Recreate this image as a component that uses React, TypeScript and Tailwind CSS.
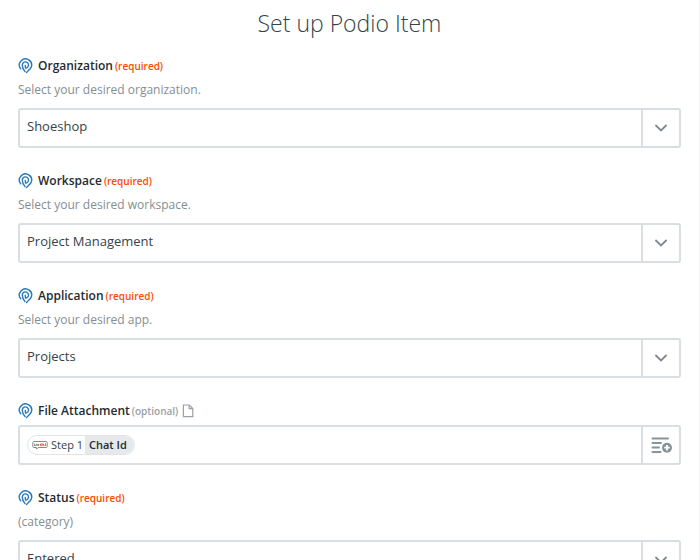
// App.tsx
import { useState } from "react";

type SelectFieldProps = {
    id: string;
    label: string;
    help: string;
    options: string[];
};

function PodioIcon() {
    return (
        <svg className="h-4 w-4 shrink-0" viewBox="0 0 16 16" fill="none" stroke="#2a7ab8" strokeWidth="1.4" strokeLinecap="round" strokeLinejoin="round">
            <path d="M2.7 10.8A6.1 6.1 0 1 1 13.1 9.4C12.2 11.2 10.2 12.6 8.6 14.5" />
            <path d="M7 13.6C5.4 11.6 4.3 9.6 4.3 7.2A3.1 3.1 0 1 1 7.5 10.1L7.3 7.4" />
        </svg>
    );
}

function ChevronIcon() {
    return (
        <svg className="h-3 w-4" viewBox="0 0 16 12" fill="none" stroke="#7d898e" strokeWidth="1.8">
            <path d="M2.4 3L8 8.4L13.6 3" />
        </svg>
    );
}

function FileIcon() {
    return (
        <svg className="h-3.5 w-3" viewBox="0 0 12 14" fill="none" stroke="#99a1a4" strokeWidth="1.2">
            <path d="M1.4 1H7.2L10.8 4.6V12.6H1.4Z" />
            <path d="M7.2 1V4.6H10.8" />
        </svg>
    );
}

function InsertFieldIcon() {
    return (
        <svg className="h-5 w-6" viewBox="0 0 24 20" fill="none">
            <path d="M3.5 3.5H19M3.5 8H12M3.5 12.5H10M3.5 17H11.5" stroke="#87959b" strokeWidth="2" strokeLinecap="round" />
            <circle cx="18" cy="12.7" r="5" fill="#87959b" />
            <path d="M18 10V15.4M15.3 12.7H20.7" stroke="#fff" strokeWidth="1.8" />
        </svg>
    );
}

function LiveChatIcon() {
    return (
        <svg className="h-4 w-4" viewBox="0 0 16 16" fill="none">
            <path d="M1.6 4.5H14.4Q15.2 4.5 15.2 5.5V9.6Q15.2 10.5 14.4 10.5H6.2L4.6 12.2V10.5H1.6Q.8 10.5 .8 9.6V5.5Q.8 4.5 1.6 4.5Z" stroke="#8a8a8a" strokeWidth="1" />
            <path d="M2.6 6.7V8.7H3.8M4.8 6.8V8.8M5.7 7L6.3 8.7L7 7" stroke="#555" strokeWidth=".8" />
            <path d="M9.8 6.9H8.6V8.7H9.8M10.8 6.4V8.8M10.8 7.7H12V8.8M13.5 6.5V8.8" stroke="#f4511e" strokeWidth="1" />
        </svg>
    );
}

function SelectField({ id, label, help, options }: SelectFieldProps) {
    const [value, setValue] = useState(options[0]);

    return (
        <div>
            <div className="flex h-[18px] items-center">
                <PodioIcon />
                <label htmlFor={id} className="ml-1 text-[12px] font-semibold text-[#1f2b30]">
                    {label}
                </label>
                <span className="ml-0.5 text-[10px] font-semibold text-[#ff4a00]">(required)</span>
            </div>
            <p className="mt-[5px] mb-2 text-[12px] leading-5 text-[#848e92]">{help}</p>
            <div className="grid h-10 grid-cols-[1fr_38px] rounded-[3px] border-2 border-[#d8dee1] bg-white">
                <select
                    id={id}
                    className="col-span-2 col-start-1 row-start-1 h-full w-full appearance-none bg-transparent pr-10 pb-0.5 pl-[7px] text-[13px] text-[#354349]"
                    value={value}
                    onChange={(e) => setValue(e.target.value)}
                >
                    {options.map((option) => (
                        <option key={option}>{option}</option>
                    ))}
                </select>
                <span className="pointer-events-none col-start-2 row-start-1 flex items-center justify-center border-l-2 border-[#d8dee1]">
                    <ChevronIcon />
                </span>
            </div>
        </div>
    );
}

export default function App() {
    const [attachment, setAttachment] = useState("");

    return (
        <div className="min-h-screen border-r border-[#f1f3f4] bg-white pr-[18px] pl-[18px] font-['Open_Sans','Noto_Sans',sans-serif]">
            <h1 className="pt-[7px] text-center text-[23px] leading-8 font-light text-[#354349]">Set up Podio Item</h1>
            <form className="mt-[18px] flex flex-col gap-6">
                <SelectField id="organization" label="Organization" help="Select your desired organization." options={["Shoeshop"]} />
                <SelectField id="workspace" label="Workspace" help="Select your desired workspace." options={["Project Management"]} />
                <SelectField id="application" label="Application" help="Select your desired app." options={["Projects"]} />
                <div>
                    <div className="flex h-[18px] items-center">
                        <PodioIcon />
                        <label htmlFor="attachment" className="ml-1 text-[12px] font-semibold text-[#1f2b30]">
                            File Attachment
                        </label>
                        <span className="mr-1 ml-0.5 text-[10px] font-semibold text-[#99a1a4]">(optional)</span>
                        <FileIcon />
                    </div>
                    <div className="mt-[5px] flex h-10 rounded-[3px] border-2 border-[#d8dee1] bg-white">
                        <div className="flex flex-1 items-center pl-[7px]">
                            <span className="flex h-5 shrink-0 items-center overflow-hidden rounded-full border border-[#e1e5e7] text-[11px] text-[#354349]">
                                <span className="flex items-center gap-[3px] pr-0.5 pl-1">
                                    <LiveChatIcon />
                                    Step 1
                                </span>
                                <span className="flex h-full items-center bg-[#e6e9eb] pr-[7px] pl-1 font-semibold text-[#1f2b30]">Chat Id</span>
                            </span>
                            <input
                                id="attachment"
                                type="text"
                                className="ml-2 min-w-0 flex-1 text-[13px] text-[#354349] outline-none"
                                value={attachment}
                                onChange={(e) => setAttachment(e.target.value)}
                            />
                        </div>
                        <button type="button" aria-label="Insert a field" className="flex w-[38px] items-center justify-center border-l-2 border-[#d8dee1]">
                            <InsertFieldIcon />
                        </button>
                    </div>
                </div>
                <SelectField id="status" label="Status" help="(category)" options={["Entered"]} />
            </form>
        </div>
    );
}
